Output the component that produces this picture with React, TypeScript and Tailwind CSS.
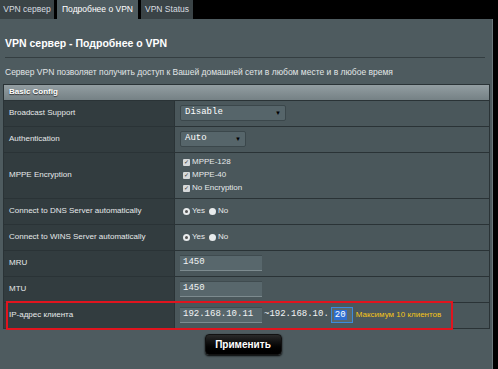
import { useState } from 'react'

const font = { fontFamily: '"Liberation Sans", Arial, sans-serif' }
const mono = { fontFamily: '"Liberation Mono", monospace' }

function Row({ label, children, tall }: { label: string; children: React.ReactNode; tall?: boolean }) {
  return (
    <div className={`flex border-t border-[#2a3336] ${tall ? 'h-[46px]' : 'h-[26px]'}`}>
      <div className="w-[170px] shrink-0 bg-[#323c3f] flex items-center pl-[5px] text-[8px] text-[#e6e9ea]">{label}</div>
      <div className="flex-1 bg-[#4a575b] border-l border-[#2a3336] flex items-center pl-[5px]">{children}</div>
    </div>
  )
}

function Select({ value, width }: { value: string; width: string }) {
  return (
    <div className={`${width} h-[16px] bg-[#56656a] border border-[#3b474b] rounded-[2px] flex items-center justify-between px-[4px] text-[9px] text-white`}>
      <span style={mono}>{value}</span>
      <span className="text-[6px] text-black">▼</span>
    </div>
  )
}

function Field({ value }: { value: string }) {
  return (
    <div
      className="w-[82px] h-[16px] bg-[#58676c] border-b border-[#7d8b8f] border-t border-t-[#3f4b4f] flex items-center px-[3px] text-[9px] text-[#f2f4f5]"
      style={mono}
    >
      {value}
    </div>
  )
}

function Check({ label }: { label: string }) {
  return (
    <div className="flex items-center gap-[2px] text-[8px] text-[#e6e9ea] h-[13px]">
      <span className="w-[7px] h-[7px] bg-[#d6d9da] rounded-[1px] flex items-center justify-center text-[6px] leading-none text-[#333]">✓</span>
      {label}
    </div>
  )
}

function Radios() {
  return (
    <div className="flex items-center text-[8px] text-[#e6e9ea] gap-[4px]">
      <span className="flex items-center gap-[2px]">
        <span className="w-[7px] h-[7px] rounded-full bg-[#e8ebec] flex items-center justify-center">
          <span className="w-[3px] h-[3px] rounded-full bg-[#555]" />
        </span>
        Yes
      </span>
      <span className="flex items-center gap-[2px]">
        <span className="w-[7px] h-[7px] rounded-full bg-[#e8ebec]" />
        No
      </span>
    </div>
  )
}

export default function App() {
  const [tab] = useState(1)
  const tabs = [
    { t: 'VPN сервер', w: 'w-[54px]' },
    { t: 'Подробнее о VPN', w: 'w-[81px]' },
    { t: 'VPN Status', w: 'w-[52px]' },
  ]

  return (
    <div className="w-[498px] h-[369px] bg-black overflow-hidden" style={font}>
      <div className="flex h-[19px] gap-[3px]">
        {tabs.map(({ t, w }, i) => (
          <div
            key={t}
            className={`${w} h-full flex items-center justify-center whitespace-nowrap text-[8.5px] ${i === tab ? 'bg-[#4e5b5f] text-white' : 'bg-[#3a4346] text-[#d9dde0]'}`}
          >
            {t}
          </div>
        ))}
      </div>

      <div className="w-[493px] h-[350px] bg-[#4e5b5f] border-r border-[#6a777b] px-[3px]">
        <div className="pt-[17px] pl-[2px] text-[10.5px] font-bold text-white">VPN сервер - Подробнее о VPN</div>
        <div className="mt-[5px] mx-[2px] h-px bg-[#343e41] mr-[4px]" />
        <div className="mt-[8px] pl-[2px] text-[8.5px] text-[#e2e6e7]">
          Сервер VPN позволяет получить доступ к Вашей домашней сети в любом месте и в любое время
        </div>

        <div className="mt-[5px] w-[487px] border border-[#2a3336]">
          <div className="h-[15px] bg-gradient-to-b from-[#939ea2] to-[#758185] flex items-center pl-[5px] text-[8px] font-bold text-white [text-shadow:0_1px_1px_#333]">
            Basic Config
          </div>
          <Row label="Broadcast Support">
            <Select value="Disable" width="w-[106px]" />
          </Row>
          <Row label="Authentication">
            <Select value="Auto" width="w-[66px]" />
          </Row>
          <Row label="MPPE Encryption" tall>
            <div className="flex flex-col pl-[3px]">
              <Check label="MPPE-128" />
              <Check label="MPPE-40" />
              <Check label="No Encryption" />
            </div>
          </Row>
          <Row label="Connect to DNS Server automatically">
            <div className="pl-[3px]"><Radios /></div>
          </Row>
          <Row label="Connect to WINS Server automatically">
            <div className="pl-[3px]"><Radios /></div>
          </Row>
          <Row label="MRU">
            <Field value="1450" />
          </Row>
          <Row label="MTU">
            <Field value="1450" />
          </Row>
          <div className="relative">
            <Row label="IP-адрес клиента">
              <Field value="192.168.10.11" />
              <span className="ml-[2px] text-[9px] text-[#f2f4f5]" style={mono}>
                ~192.168.10.
              </span>
              <span
                className="ml-[2px] w-[22px] h-[16px] border border-[#3b8bdc] bg-[#58676c] flex items-center pl-[2px]"
                style={mono}
              >
                <span className="bg-[#2f6fd1] text-white text-[9px] leading-[10px] px-px">20</span>
              </span>
              <span className="ml-[3px] text-[8px] text-[#f5c518]">Максимум 10 клиентов</span>
            </Row>
            <div className="absolute left-[2px] top-[-1px] w-[447px] h-[29px] border-2 border-[#e0141e]" />
          </div>
        </div>

        <div className="flex justify-center mt-[5px] pr-[6px]">
          <div className="w-[77px] h-[21px] bg-gradient-to-b from-[#2a2a2a] to-black rounded-[4px] border border-[#111] flex items-center justify-center text-[10px] font-bold text-white shadow-[0_1px_2px_#000]">
            Применить
          </div>
        </div>
      </div>
    </div>
  )
}
